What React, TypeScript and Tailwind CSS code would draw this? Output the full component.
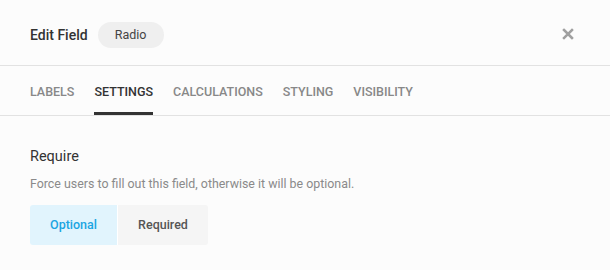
import React from "react";

export default function App() {
  const tabs = ["LABELS", "SETTINGS", "CALCULATIONS", "STYLING", "VISIBILITY"];
  return (
    <div
      className="w-[610px] h-[270px] bg-[#fcfcfc] overflow-hidden"
      style={{ fontFamily: "Roboto, 'Liberation Sans', sans-serif" }}
    >
      <div className="h-[66px] pt-[5px] px-[30px] flex items-center justify-between border-b border-[#e2e2e2]">
        <div className="flex items-center gap-[10px]">
          <span className="text-[14px] font-medium text-[#333]">Edit Field</span>
          <span className="h-[26px] w-[66px] rounded-full bg-[#efefef] text-[12.5px] text-[#444] flex items-center justify-center">
            Radio
          </span>
        </div>
        <svg width="12" height="12" viewBox="0 0 12 12" className="mr-[6px] -mt-[2px]">
          <path d="M2 2 L10 10 M10 2 L2 10" stroke="#a0a0a0" strokeWidth="2.5" strokeLinecap="square" />
        </svg>
      </div>
      <div className="h-[50px] px-[30px] flex gap-[20px] border-b border-[#e2e2e2]">
        {tabs.map((t) => (
          <div
            key={t}
            className={
              t === "SETTINGS"
                ? "h-full flex items-center pt-[6px] text-[12.5px] font-medium text-[#333] border-b-[3px] border-[#333]"
                : "h-full flex items-center pt-[3px] text-[12.5px] font-medium text-[#888]"
            }
          >
            {t}
          </div>
        ))}
      </div>
      <div className="px-[30px] pt-[32px]">
        <div className="text-[14.5px] text-[#333] leading-[18px]">Require</div>
        <div className="mt-[10px] text-[12.4px] text-[#8a8a8a] leading-[16px]">
          Force users to fill out this field, otherwise it will be optional.
        </div>
        <div className="mt-[13px] flex w-[178px] h-[40px] rounded-[3px] overflow-hidden">
          <div className="w-[87px] bg-[#e1f4fd] text-[#1ba5e2] text-[12.5px] font-medium flex items-center justify-center">
            Optional
          </div>
          <div className="w-[1px] bg-white" />
          <div className="flex-1 bg-[#f5f5f5] text-[#555] text-[12.5px] font-medium flex items-center justify-center">
            Required
          </div>
        </div>
      </div>
    </div>
  );
}
